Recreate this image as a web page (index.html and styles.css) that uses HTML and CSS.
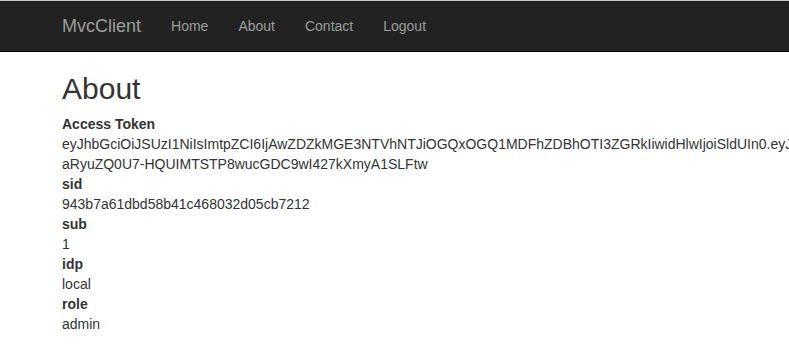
FILE: index.html
```html
<!DOCTYPE html>
<html lang="en">
<head>
    <meta charset="UTF-8">
    <meta name="viewport" content="width=device-width, initial-scale=1.0">
    <title>About - MvcClient</title>
    <link rel="stylesheet" href="styles.css">
</head>
<body>
    <div class="navbar">
        <div class="container nav-inner">
            <a class="navbar-brand" href="#">MvcClient</a>
            <ul class="nav">
                <li><a href="#">Home</a></li>
                <li><a href="#">About</a></li>
                <li><a href="#">Contact</a></li>
                <li><a href="#">Logout</a></li>
            </ul>
        </div>
    </div>

    <div class="container body-content">
        <h1>About</h1>
        <dl>
            <dt>Access Token</dt>
            <dd class="token">eyJhbGciOiJSUzI1NiIsImtpZCI6IjAwZDZkMGE3NTVhNTJiOGQxOGQ1MDFhZDBhOTI3ZGRkIiwidHlwIjoiSldUIn0.eyJuYmYiOjE0NzQ5NjU2NzMsImV4cCI6MTQ3NDk2OTI3MywiaXNzIjoiaHR0cDovL2xvY2FsaG9zdDo1MDAwIiwiYXVkIjoiaHR0cDovL2xvY2FsaG9zdDo1MDAwL3Jlc291cmNlcyJ9-<br>aRyuZQ0U7-HQUIMTSTP8wucGDC9wI427kXmyA1SLFtw</dd>
            <dt>sid</dt>
            <dd>943b7a61dbd58b41c468032d05cb7212</dd>
            <dt>sub</dt>
            <dd>1</dd>
            <dt>idp</dt>
            <dd>local</dd>
            <dt>role</dt>
            <dd>admin</dd>
        </dl>
    </div>
</body>
</html>
```

FILE: styles.css
```css
html, body {
    overflow-x: hidden;
}
body {
    margin: 0;
    padding-top: 51px;
    font-family: "Liberation Sans", Arial, sans-serif;
    font-size: 14px;
    line-height: 20px;
    color: #333333;
    background-color: #ffffff;
}
a {
    text-decoration: none;
}
.container {
    padding: 0 15px 0 47px;
}
.navbar {
    position: fixed;
    top: 0;
    left: 0;
    right: 0;
    height: 52px;
    background-color: #222222;
    border-top: 1px solid #c8c8c8;
    border-bottom: 1px solid #080808;
    box-sizing: border-box;
}
.nav-inner {
    display: flex;
    align-items: center;
    height: 50px;
}
.navbar-brand {
    padding: 15px;
    font-size: 18px;
    line-height: 20px;
    color: #9d9d9d;
}
.nav {
    display: flex;
    list-style: none;
    margin: 0;
    padding: 0;
}
.nav a {
    display: block;
    padding: 15px;
    line-height: 20px;
    color: #9d9d9d;
}
.body-content {
    padding-top: 1px;
}
.body-content h1 {
    margin: 20px 15px 9px;
    font-size: 30px;
    font-weight: 500;
    line-height: 33px;
}
dl {
    margin: 0 15px 20px;
}
dt {
    font-weight: bold;
}
dd {
    margin: 0;
}
.token {
    white-space: nowrap;
}
```
